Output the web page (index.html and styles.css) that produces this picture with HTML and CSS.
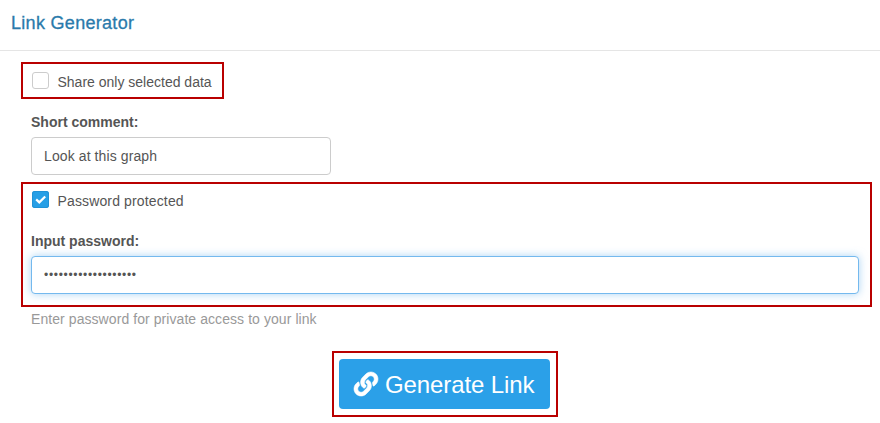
FILE: index.html
```
<!DOCTYPE html>
<html lang="en">
<head>
<meta charset="utf-8">
<title>Link Generator</title>
<link rel="stylesheet" href="styles.css">
</head>
<body>
<header class="header"><h1 class="title">Link Generator</h1></header>
<main class="content">
  <section class="outline share">
    <label class="check"><span class="box"></span><span class="check-text">Share only selected data</span></label>
  </section>
  <section class="comment">
    <label class="label" for="comment">Short comment:</label>
    <input class="input input-short" id="comment" type="text" value="Look at this graph">
  </section>
  <section class="outline protect">
    <label class="check check-protect"><span class="box checked"><svg viewBox="0 0 17 17"><path d="M4.2 8.4 7.3 11.4 13.2 5.5" fill="none" stroke="#fff" stroke-width="2.2"/></svg></span><span class="check-text">Password protected</span></label>
    <label class="label label-password" for="password">Input password:</label>
    <input class="input focused" id="password" type="text" value="•••••••••••••••••••">
  </section>
  <p class="hint">Enter password for private access to your link</p>
  <div class="outline action">
    <button class="button" type="button">
      <svg class="icon" viewBox="0 0 512 512"><path fill="currentColor" stroke="currentColor" stroke-width="12" d="M326.612 185.391c59.747 59.809 58.927 155.698.36 214.59-.11.12-.24.25-.36.37l-67.2 67.2c-59.27 59.27-155.699 59.262-214.96 0-59.27-59.26-59.27-155.7 0-214.96l37.106-37.106c9.84-9.84 26.786-3.3 27.294 10.606.648 17.722 3.826 35.527 9.69 52.721 1.986 5.822.567 12.262-3.783 16.612l-13.087 13.087c-28.026 28.026-28.905 73.66-1.155 101.96 28.024 28.579 74.086 28.749 102.325.51l67.2-67.19c28.191-28.191 28.073-73.757 0-101.83-3.701-3.694-7.429-6.564-10.341-8.569a16.037 16.037 0 0 1-6.947-12.606c-.396-10.567 3.348-21.456 11.698-29.806l21.054-21.055c5.521-5.521 14.182-6.199 20.584-1.731a152.482 152.482 0 0 1 20.522 17.197zM467.547 44.449c-59.261-59.262-155.69-59.27-214.96 0l-67.2 67.2c-.12.12-.25.25-.36.37-58.566 58.892-59.387 154.781.36 214.59a152.454 152.454 0 0 0 20.521 17.196c6.402 4.468 15.064 3.789 20.584-1.731l21.054-21.055c8.35-8.35 12.094-19.239 11.698-29.806a16.037 16.037 0 0 0-6.947-12.606c-2.912-2.005-6.64-4.875-10.341-8.569-28.073-28.073-28.191-73.639 0-101.83l67.2-67.19c28.239-28.239 74.3-28.069 102.325.51 27.75 28.3 26.872 73.934-1.155 101.96l-13.087 13.087c-4.35 4.35-5.769 10.79-3.783 16.612 5.864 17.194 9.042 34.999 9.69 52.721.509 13.906 17.454 20.446 27.294 10.606l37.106-37.106c59.271-59.259 59.271-155.699.001-214.959z"/></svg>
      <span>Generate Link</span>
    </button>
  </div>
</main>
</body>
</html>
```
FILE: styles.css
```
* { box-sizing: border-box; }
body {
  margin: 0;
  background: #fff;
  color: #555;
  font: 14px/20px "Liberation Sans", Arial, sans-serif;
}
.header {
  height: 51px;
  padding: 13px 11px 0;
  border-bottom: 1px solid #e5e5e5;
}
.title {
  margin: 0;
  color: #2a7aab;
  font-size: 18px;
  font-weight: 400;
  line-height: 20px;
  letter-spacing: 0.3px;
  -webkit-text-stroke: 0.3px #2a7aab;
}
.content { padding: 11px 8px 0 21px; }
.outline { border: 2px solid #b90000; }
.share { width: 203px; height: 37px; padding: 8px 0 0 9px; }
.check { display: flex; align-items: flex-start; height: 20px; }
.check-protect { padding-left: 1px; letter-spacing: 0.14px; }
.box {
  flex: none;
  width: 17px;
  height: 17px;
  margin-right: 8.5px;
  border: 1px solid #ccc;
  border-radius: 3px;
}
.box.checked {
  border: 0;
  background: #279fe6;
  box-shadow: inset 0 0 0 1px #2192d6;
}
.box svg { display: block; width: 17px; height: 17px; }
.check-text { white-space: nowrap; line-height: 20px; }
.comment { height: 83px; padding: 13px 0 0 10px; }
.label { display: block; font-weight: 700; }
.input {
  display: block;
  width: 100%;
  height: 38px;
  margin-top: 5px;
  padding: 0 12px;
  border: 1px solid #ccc;
  border-radius: 4px;
  background: #fff;
  color: #555;
  font: inherit;
  outline: none;
}
.input-short { width: 300px; letter-spacing: 0.1px; }
.protect { height: 125px; padding: 7px 11px 0 8px; }
.label-password { margin-top: 20px; }
.focused {
  border-color: #74b9ee;
  box-shadow: 0 0 8px rgba(102, 175, 233, 0.55);
  font-size: 12px;
  letter-spacing: 0.68px;
}
.hint { margin: 2px 0 0 10px; color: #999; letter-spacing: 0.07px; }
.action {
  width: 226px;
  height: 66px;
  margin: 22px 0 0 311px;
  padding: 6px 6px 8px 5px;
}
.button {
  display: flex;
  align-items: center;
  width: 211px;
  height: 50px;
  padding: 1px 0 0 15px;
  border: 0;
  border-radius: 4px;
  background: #2ba0e8;
  color: #fff;
  font: 24px/50px "Liberation Sans", Arial, sans-serif;
  letter-spacing: -0.1px;
  white-space: nowrap;
}
.icon { flex: none; width: 24px; height: 24px; margin: 0 7px 2px 0; overflow: visible; }
```
